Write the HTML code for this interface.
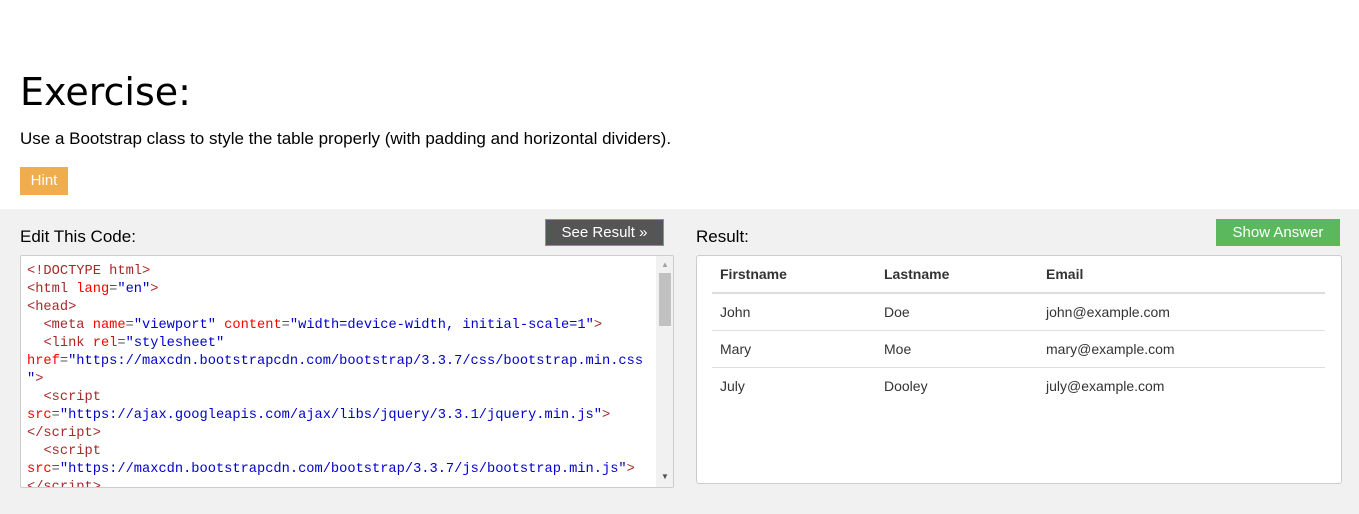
<!DOCTYPE html>
<html><head><style>
body{margin:0;width:1359px;height:514px;overflow:hidden;background:#fff;font-family:"Liberation Sans",Arial,sans-serif;position:relative}
.a{position:absolute}
h1{position:absolute;left:20px;top:70px;margin:0;font:38px "DejaVu Sans",sans-serif;font-weight:normal;color:#000}
.gray{position:absolute;left:0;top:209px;width:1359px;height:305px;background:#f1f1f1}
.btn{position:absolute;color:#fff;font-size:15px;text-align:center;box-sizing:border-box}
pre{margin:0;font-family:"Liberation Mono","DejaVu Sans Mono",monospace;font-size:13.7px;line-height:18px;color:#555;padding:7px 0 0 6px}
.t{color:#a52a2a}.r{color:red}.b{color:#0000cd}
table{border-collapse:collapse;position:absolute;left:15px;top:0;width:613px;font-size:14px;color:#333}
td,th{text-align:left;padding:0 8px;height:36px}
th{height:36px;border-bottom:2px solid #ddd}
tr+tr td{border-top:1px solid #ddd}
</style></head><body>
<h1>Exercise:</h1>
<div class="a" style="left:20px;top:129px;font-size:17px;color:#000">Use a Bootstrap class to style the table properly (with padding and horizontal dividers).</div>
<div class="btn" style="left:20px;top:167px;width:48px;height:28px;line-height:28px;background:#f0ad4e">Hint</div>
<div class="gray"></div>
<div class="a" style="left:20px;top:227px;font-size:17px;color:#000">Edit This Code:</div>
<div class="btn" style="left:545px;top:219px;width:119px;height:27px;line-height:25px;background:#555;border:1px solid #6f8fd8">See Result »</div>
<div class="a" style="left:696px;top:227px;font-size:17px;color:#000">Result:</div>
<div class="btn" style="left:1216px;top:219px;width:124px;height:27px;line-height:27px;background:#5cb85c">Show Answer</div>
<div class="a" style="left:20px;top:255px;width:652px;height:231px;background:#fff;border:1px solid #ccc;overflow:hidden;border-radius:2px">
<pre><span class="t">&lt;!DOCTYPE html&gt;</span>
<span class="t">&lt;html</span> <span class="r">lang</span>=<span class="b">"en"</span><span class="t">&gt;</span>
<span class="t">&lt;head&gt;</span>
  <span class="t">&lt;meta</span> <span class="r">name</span>=<span class="b">"viewport"</span> <span class="r">content</span>=<span class="b">"width=device-width, initial-scale=1"</span><span class="t">&gt;</span>
  <span class="t">&lt;link</span> <span class="r">rel</span>=<span class="b">"stylesheet"</span>
<span class="r">href</span>=<span class="b">"https://maxcdn.bootstrapcdn.com/bootstrap/3.3.7/css/bootstrap.min.css</span>
<span class="b">"</span><span class="t">&gt;</span>
  <span class="t">&lt;script</span>
<span class="r">src</span>=<span class="b">"https://ajax.googleapis.com/ajax/libs/jquery/3.3.1/jquery.min.js"</span><span class="t">&gt;</span>
<span class="t">&lt;/script&gt;</span>
  <span class="t">&lt;script</span>
<span class="r">src</span>=<span class="b">"https://maxcdn.bootstrapcdn.com/bootstrap/3.3.7/js/bootstrap.min.js"</span><span class="t">&gt;</span>
<span class="t">&lt;/script&gt;</span></pre>
<div class="a" style="left:635px;top:0;width:17px;height:231px;background:#f1f1f1"></div>
<div class="a" style="left:638px;top:17px;width:12px;height:53px;background:#c1c1c1"></div>
<div class="a" style="left:640px;top:4px;font-size:8px;color:#a3a3a3">▲</div>
<div class="a" style="left:640px;top:216px;font-size:8px;color:#505050">▼</div>
</div>
<div class="a" style="left:696px;top:255px;width:644px;height:227px;background:#fff;border:1px solid #ccc;border-radius:3px">
<table>
<tr><th>Firstname</th><th>Lastname</th><th>Email</th></tr>
<tr><td style="width:148px">John</td><td style="width:146px">Doe</td><td>john@example.com</td></tr>
<tr><td>Mary</td><td>Moe</td><td>mary@example.com</td></tr>
<tr><td>July</td><td>Dooley</td><td>july@example.com</td></tr>
</table>
</div>
</body></html>
